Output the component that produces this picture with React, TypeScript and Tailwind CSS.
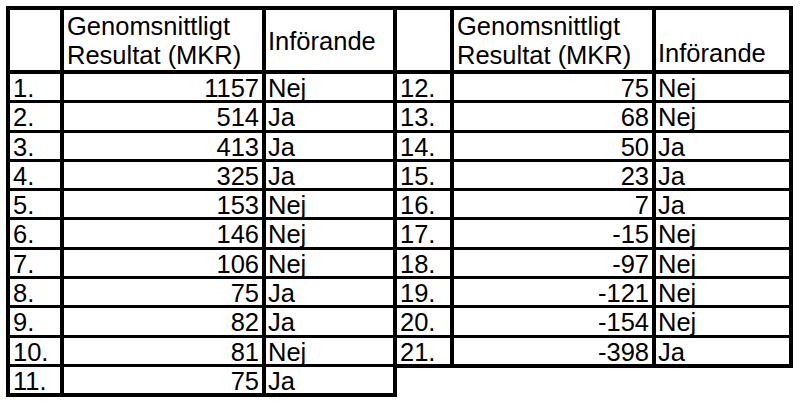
const left: [string, string, string][] = [
  ["1.", "1157", "Nej"],
  ["2.", "514", "Ja"],
  ["3.", "413", "Ja"],
  ["4.", "325", "Ja"],
  ["5.", "153", "Nej"],
  ["6.", "146", "Nej"],
  ["7.", "106", "Nej"],
  ["8.", "75", "Ja"],
  ["9.", "82", "Ja"],
  ["10.", "81", "Nej"],
  ["11.", "75", "Ja"],
];

const right: [string, string, string][] = [
  ["12.", "75", "Nej"],
  ["13.", "68", "Nej"],
  ["14.", "50", "Ja"],
  ["15.", "23", "Ja"],
  ["16.", "7", "Ja"],
  ["17.", "-15", "Nej"],
  ["18.", "-97", "Nej"],
  ["19.", "-121", "Nej"],
  ["20.", "-154", "Nej"],
  ["21.", "-398", "Ja"],
];

function ResultTable({
  rows,
  cols,
  width,
  bottomHeader,
}: {
  rows: [string, string, string][];
  cols: string;
  width: string;
  bottomHeader?: boolean;
}) {
  return (
    <div className={`border-4 border-black bg-white ${width}`}>
      <div className={`grid ${cols} h-[60px]`}>
        <div />
        <div className="border-l-4 border-black pl-[3px] pt-[2px] leading-[29px]">
          Genomsnittligt
          <br />
          Resultat (MKR)
        </div>
        <div
          className={`flex border-l-4 border-black pl-[2px] leading-[30px] ${
            bottomHeader ? "items-end pb-[2px]" : "items-center pt-[1px]"
          }`}
        >
          Införande
        </div>
      </div>
      {rows.map(([n, v, inf], i) => (
        <div
          key={n}
          className={`grid ${cols} h-[26.3px] box-content border-black leading-[28px] ${
            i === 0 ? "border-t-4" : "border-t-[3px]"
          }`}
        >
          <div className="pl-[3px]">{n}</div>
          <div className="border-l-4 border-black pr-[3px] text-right">{v}</div>
          <div className="border-l-4 border-black pl-[2px]">{inf}</div>
        </div>
      ))}
    </div>
  );
}

export default function App() {
  return (
    <div
      className="w-[801px] h-[406px] bg-white pl-[6px] pt-[6px] text-[25.5px] text-black"
      style={{ fontFamily: '"Liberation Sans", Arial, sans-serif' }}
    >
      <div className="flex items-start">
        <ResultTable rows={left} cols="grid-cols-[50px_202px_131px]" width="w-[391px]" />
        <div className="-ml-[4px]">
          <ResultTable
            rows={right}
            cols="grid-cols-[53px_202px_137px]"
            width="w-[400px]"
            bottomHeader
          />
        </div>
      </div>
    </div>
  );
}
